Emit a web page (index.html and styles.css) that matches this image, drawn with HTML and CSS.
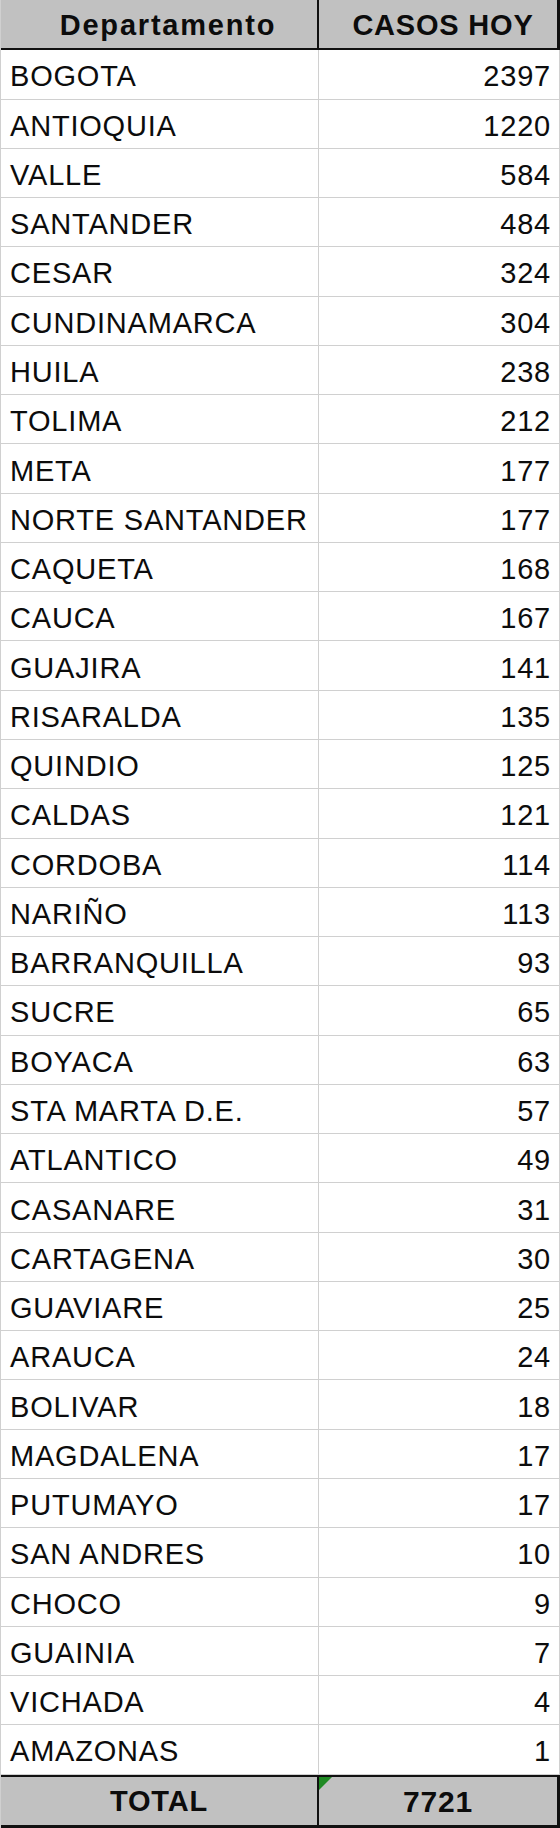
FILE: index.html
```html
<!DOCTYPE html>
<html lang="es">
<head>
<meta charset="utf-8">
<title>Casos hoy por departamento</title>
<link rel="stylesheet" href="styles.css">
</head>
<body>
<div class="sheet">
  <div class="row head"><div class="cell name">Departamento</div><div class="cell num">CASOS HOY</div></div>
  <div class="row"><div class="cell name">BOGOTA</div><div class="cell num">2397</div></div>
  <div class="row"><div class="cell name">ANTIOQUIA</div><div class="cell num">1220</div></div>
  <div class="row"><div class="cell name">VALLE</div><div class="cell num">584</div></div>
  <div class="row"><div class="cell name">SANTANDER</div><div class="cell num">484</div></div>
  <div class="row"><div class="cell name">CESAR</div><div class="cell num">324</div></div>
  <div class="row"><div class="cell name">CUNDINAMARCA</div><div class="cell num">304</div></div>
  <div class="row"><div class="cell name">HUILA</div><div class="cell num">238</div></div>
  <div class="row"><div class="cell name">TOLIMA</div><div class="cell num">212</div></div>
  <div class="row"><div class="cell name">META</div><div class="cell num">177</div></div>
  <div class="row"><div class="cell name">NORTE SANTANDER</div><div class="cell num">177</div></div>
  <div class="row"><div class="cell name">CAQUETA</div><div class="cell num">168</div></div>
  <div class="row"><div class="cell name">CAUCA</div><div class="cell num">167</div></div>
  <div class="row"><div class="cell name">GUAJIRA</div><div class="cell num">141</div></div>
  <div class="row"><div class="cell name">RISARALDA</div><div class="cell num">135</div></div>
  <div class="row"><div class="cell name">QUINDIO</div><div class="cell num">125</div></div>
  <div class="row"><div class="cell name">CALDAS</div><div class="cell num">121</div></div>
  <div class="row"><div class="cell name">CORDOBA</div><div class="cell num">114</div></div>
  <div class="row"><div class="cell name">NARIÑO</div><div class="cell num">113</div></div>
  <div class="row"><div class="cell name">BARRANQUILLA</div><div class="cell num">93</div></div>
  <div class="row"><div class="cell name">SUCRE</div><div class="cell num">65</div></div>
  <div class="row"><div class="cell name">BOYACA</div><div class="cell num">63</div></div>
  <div class="row"><div class="cell name">STA MARTA D.E.</div><div class="cell num">57</div></div>
  <div class="row"><div class="cell name">ATLANTICO</div><div class="cell num">49</div></div>
  <div class="row"><div class="cell name">CASANARE</div><div class="cell num">31</div></div>
  <div class="row"><div class="cell name">CARTAGENA</div><div class="cell num">30</div></div>
  <div class="row"><div class="cell name">GUAVIARE</div><div class="cell num">25</div></div>
  <div class="row"><div class="cell name">ARAUCA</div><div class="cell num">24</div></div>
  <div class="row"><div class="cell name">BOLIVAR</div><div class="cell num">18</div></div>
  <div class="row"><div class="cell name">MAGDALENA</div><div class="cell num">17</div></div>
  <div class="row"><div class="cell name">PUTUMAYO</div><div class="cell num">17</div></div>
  <div class="row"><div class="cell name">SAN ANDRES</div><div class="cell num">10</div></div>
  <div class="row"><div class="cell name">CHOCO</div><div class="cell num">9</div></div>
  <div class="row"><div class="cell name">GUAINIA</div><div class="cell num">7</div></div>
  <div class="row"><div class="cell name">VICHADA</div><div class="cell num">4</div></div>
  <div class="row"><div class="cell name">AMAZONAS</div><div class="cell num">1</div></div>
  <div class="row total"><div class="cell name">TOTAL</div><div class="cell num"><span class="flag"></span>7721</div></div>
</div>
</body>
</html>
```

FILE: styles.css
```css
html, body {
  margin: 0;
  padding: 0;
  background: #ffffff;
}

.sheet {
  width: 560px;
  height: 1828px;
  box-sizing: border-box;
  display: flex;
  flex-direction: column;
  border-left: 1px solid #d0d0d0;
  font-family: "Liberation Sans", Arial, sans-serif;
  font-size: 29px;
  letter-spacing: 0.8px;
  color: #0c0c0c;
}

.row {
  flex: 1 1 0;
  min-height: 0;
  display: grid;
  grid-template-columns: 318px 1fr;
  border-bottom: 1px solid #d0d0d0;
  border-right: 1px solid #d0d0d0;
}

.cell {
  display: flex;
  align-items: center;
  padding: 5px 8px 0 9px;
  white-space: nowrap;
  overflow: hidden;
}

.name {
  border-right: 1px solid #d0d0d0;
}

.num {
  justify-content: flex-end;
}

.head,
.total {
  background: #c1c1c1;
  font-weight: bold;
  border-right: 3px solid #111111;
}

.head {
  border-bottom: 2px solid #111111;
}

.total {
  border-top: 2px solid #111111;
  border-bottom: 3px solid #111111;
}

.head .cell,
.total .cell {
  justify-content: center;
  padding: 2px 4px 0 4px;
}

.head .name {
  letter-spacing: 1.8px;
  padding-left: 18px;
  padding-right: 0;
}

.head .num {
  padding-left: 10px;
  padding-right: 0;
}

.head .name,
.total .name {
  border-right: 2px solid #111111;
}

.total .num {
  position: relative;
  font-size: 30px;
}

.flag {
  position: absolute;
  top: 0;
  left: 0;
  width: 0;
  height: 0;
  border-top: 13px solid #1f8a23;
  border-right: 13px solid transparent;
}
```
